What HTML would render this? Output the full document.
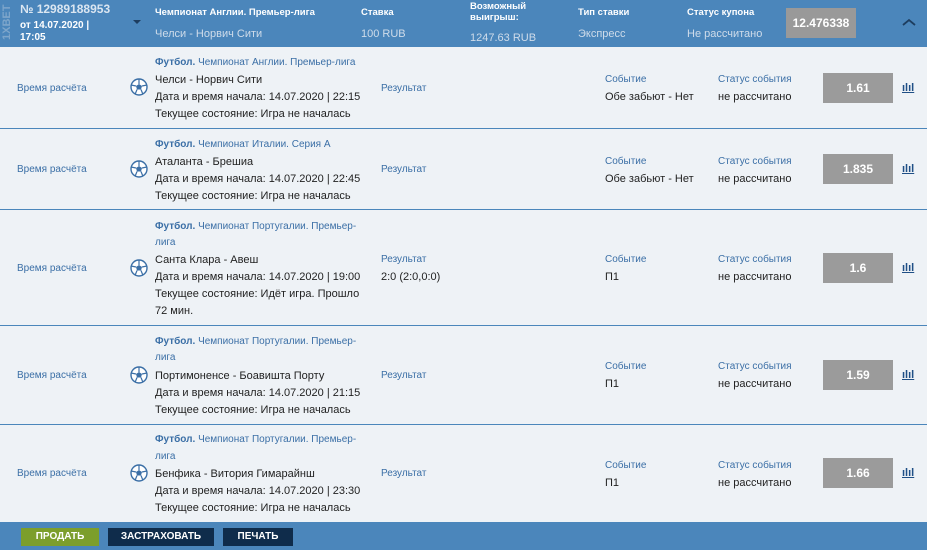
<!DOCTYPE html>
<html><head><meta charset="utf-8"><style>
*{margin:0;padding:0;box-sizing:border-box}
body{width:927px;height:550px;overflow:hidden;background:#eef2f6;font-family:"Liberation Sans","Noto Sans CJK SC",sans-serif;position:relative;color:#222}
.a{position:absolute;white-space:nowrap;line-height:16px}
.hd{position:absolute;left:0;top:0;width:927px;height:47px;background:#4b86bb}
.ft{position:absolute;left:0;top:522px;width:927px;height:28px;background:#4b86bb}
.line{position:absolute;left:0;width:927px;height:1px;background:#4b86bb}
.s{font-size:10px;color:#3b6fa6;margin-top:1px}
.m{font-size:11px;color:#222;margin-top:1px}
.odd{position:absolute;left:823px;width:70px;height:30px;background:#9b9b9b;color:#fff;font-weight:bold;font-size:12px;text-align:center;line-height:30px}
.btn{position:absolute;top:528px;height:18px;color:#fff;font-weight:bold;font-size:10px;text-align:center;line-height:18px}
.hw{color:#fff;font-size:9.5px;font-weight:bold}
.hl{color:#cfdcea;font-size:11px}
.ch{left:902px;font-weight:bold;font-size:11px;text-decoration:underline;color:#1f4f86}
</style></head><body>
<div class="hd"></div>
<div class="a" style="font-size:11px;font-weight:bold;color:#7ea6cb;transform:rotate(-90deg);transform-origin:0 0;top:40px;left:-1px">1XBET</div>
<div class="a" style="left:20px;top:1px;font-size:12px;font-weight:bold;color:#dbe6f1">№ 12989188953</div>
<div class="a" style="left:20px;top:20px;font-size:10px;font-weight:bold;color:#fff;line-height:12px">от 14.07.2020 |<br>17:05</div>
<div class="a" style="left:133px;top:20px;width:0;height:0;border-left:4px solid transparent;border-right:4px solid transparent;border-top:4px solid #1d3d5f"></div>
<div class="a hw" style="left:155px;top:5px">Чемпионат Англии. Премьер-лига</div>
<div class="a hl" style="left:155px;top:26px">Челси - Норвич Сити</div>
<div class="a hw" style="left:361px;top:5px">Ставка</div>
<div class="a hl" style="left:361px;top:26px">100 RUB</div>
<div class="a hw" style="left:470px;top:1px;line-height:11px">Возможный<br>выигрыш:</div>
<div class="a hl" style="left:470px;top:30px">1247.63 RUB</div>
<div class="a hw" style="left:578px;top:5px">Тип ставки</div>
<div class="a hl" style="left:578px;top:26px">Экспресс</div>
<div class="a hw" style="left:687px;top:5px">Статус купона</div>
<div class="a hl" style="left:687px;top:26px">Не рассчитано</div>
<div class="a" style="left:786px;top:8px;width:70px;height:30px;background:#999;color:#fff;font-weight:bold;font-size:12px;text-align:center;line-height:30px">12.476338</div>
<svg class="a" style="left:902px;top:18px" width="14" height="9"><path d="M1 7L7 2L13 7" stroke="#1d3d5f" stroke-width="1.8" fill="none"/></svg>

<!-- row 1 -->
<div class="a s" style="left:17px;top:80px">Время расчёта</div>
<svg class="a" style="left:130px;top:78px" width="18" height="18" viewBox="0 0 18 18"><circle cx="9" cy="9" r="8" fill="#fff" stroke="#3b6fa6" stroke-width="1.4"/><path d="M9 6l3 2-1 3.5H7L6 8z" fill="#3b6fa6"/><path d="M9 1v5M12 8l5-1M11 11.5l2 5M7 11.5l-2 5M6 8L1 7" stroke="#3b6fa6" stroke-width="1.2"/></svg>
<div class="a s" style="left:155px;top:54px"><b>Футбол.</b> Чемпионат Англии. Премьер-лига</div>
<div class="a m" style="left:155px;top:71px">Челси - Норвич Сити</div>
<div class="a m" style="left:155px;top:88px">Дата и время начала: 14.07.2020 | 22:15</div>
<div class="a m" style="left:155px;top:105px">Текущее состояние: Игра не началась</div>
<div class="a s" style="left:381px;top:80px">Результат</div>
<div class="a s" style="left:605px;top:71px">Событие</div>
<div class="a m" style="left:605px;top:88px">Обе забьют - Нет</div>
<div class="a s" style="left:718px;top:71px">Статус события</div>
<div class="a m" style="left:718px;top:88px">не рассчитано</div>
<div class="odd" style="top:73px">1.61</div>
<div class="a ch" style="top:80px">ılıl</div>
<div class="line" style="top:128px"></div>

<!-- row 2 -->
<div class="a s" style="left:17px;top:161px">Время расчёта</div>
<svg class="a" style="left:130px;top:160px" width="18" height="18" viewBox="0 0 18 18"><circle cx="9" cy="9" r="8" fill="#fff" stroke="#3b6fa6" stroke-width="1.4"/><path d="M9 6l3 2-1 3.5H7L6 8z" fill="#3b6fa6"/><path d="M9 1v5M12 8l5-1M11 11.5l2 5M7 11.5l-2 5M6 8L1 7" stroke="#3b6fa6" stroke-width="1.2"/></svg>
<div class="a s" style="left:155px;top:136px"><b>Футбол.</b> Чемпионат Италии. Серия А</div>
<div class="a m" style="left:155px;top:153px">Аталанта - Брешиа</div>
<div class="a m" style="left:155px;top:170px">Дата и время начала: 14.07.2020 | 22:45</div>
<div class="a m" style="left:155px;top:187px">Текущее состояние: Игра не началась</div>
<div class="a s" style="left:381px;top:161px">Результат</div>
<div class="a s" style="left:605px;top:153px">Событие</div>
<div class="a m" style="left:605px;top:170px">Обе забьют - Нет</div>
<div class="a s" style="left:718px;top:153px">Статус события</div>
<div class="a m" style="left:718px;top:170px">не рассчитано</div>
<div class="odd" style="top:154px">1.835</div>
<div class="a ch" style="top:161px">ılıl</div>
<div class="line" style="top:209px"></div>

<!-- row 3 -->
<div class="a s" style="left:17px;top:260px">Время расчёта</div>
<svg class="a" style="left:130px;top:259px" width="18" height="18" viewBox="0 0 18 18"><circle cx="9" cy="9" r="8" fill="#fff" stroke="#3b6fa6" stroke-width="1.4"/><path d="M9 6l3 2-1 3.5H7L6 8z" fill="#3b6fa6"/><path d="M9 1v5M12 8l5-1M11 11.5l2 5M7 11.5l-2 5M6 8L1 7" stroke="#3b6fa6" stroke-width="1.2"/></svg>
<div class="a s" style="left:155px;top:218px"><b>Футбол.</b> Чемпионат Португалии. Премьер-</div>
<div class="a s" style="left:155px;top:234px">лига</div>
<div class="a m" style="left:155px;top:251px">Санта Клара - Авеш</div>
<div class="a m" style="left:155px;top:268px">Дата и время начала: 14.07.2020 | 19:00</div>
<div class="a m" style="left:155px;top:285px">Текущее состояние: Идёт игра. Прошло</div>
<div class="a m" style="left:155px;top:302px">72 мин.</div>
<div class="a s" style="left:381px;top:251px">Результат</div>
<div class="a m" style="left:381px;top:268px">2:0 (2:0,0:0)</div>
<div class="a s" style="left:605px;top:251px">Событие</div>
<div class="a m" style="left:605px;top:268px">П1</div>
<div class="a s" style="left:718px;top:251px">Статус события</div>
<div class="a m" style="left:718px;top:268px">не рассчитано</div>
<div class="odd" style="top:253px">1.6</div>
<div class="a ch" style="top:260px">ılıl</div>
<div class="line" style="top:325px"></div>

<!-- row 4 -->
<div class="a s" style="left:17px;top:367px">Время расчёта</div>
<svg class="a" style="left:130px;top:366px" width="18" height="18" viewBox="0 0 18 18"><circle cx="9" cy="9" r="8" fill="#fff" stroke="#3b6fa6" stroke-width="1.4"/><path d="M9 6l3 2-1 3.5H7L6 8z" fill="#3b6fa6"/><path d="M9 1v5M12 8l5-1M11 11.5l2 5M7 11.5l-2 5M6 8L1 7" stroke="#3b6fa6" stroke-width="1.2"/></svg>
<div class="a s" style="left:155px;top:333px"><b>Футбол.</b> Чемпионат Португалии. Премьер-</div>
<div class="a s" style="left:155px;top:349px">лига</div>
<div class="a m" style="left:155px;top:367px">Портимоненсе - Боавишта Порту</div>
<div class="a m" style="left:155px;top:384px">Дата и время начала: 14.07.2020 | 21:15</div>
<div class="a m" style="left:155px;top:401px">Текущее состояние: Игра не началась</div>
<div class="a s" style="left:381px;top:367px">Результат</div>
<div class="a s" style="left:605px;top:358px">Событие</div>
<div class="a m" style="left:605px;top:375px">П1</div>
<div class="a s" style="left:718px;top:358px">Статус события</div>
<div class="a m" style="left:718px;top:375px">не рассчитано</div>
<div class="odd" style="top:360px">1.59</div>
<div class="a ch" style="top:367px">ılıl</div>
<div class="line" style="top:424px"></div>

<!-- row 5 -->
<div class="a s" style="left:17px;top:465px">Время расчёта</div>
<svg class="a" style="left:130px;top:464px" width="18" height="18" viewBox="0 0 18 18"><circle cx="9" cy="9" r="8" fill="#fff" stroke="#3b6fa6" stroke-width="1.4"/><path d="M9 6l3 2-1 3.5H7L6 8z" fill="#3b6fa6"/><path d="M9 1v5M12 8l5-1M11 11.5l2 5M7 11.5l-2 5M6 8L1 7" stroke="#3b6fa6" stroke-width="1.2"/></svg>
<div class="a s" style="left:155px;top:431px"><b>Футбол.</b> Чемпионат Португалии. Премьер-</div>
<div class="a s" style="left:155px;top:448px">лига</div>
<div class="a m" style="left:155px;top:465px">Бенфика - Витория Гимарайнш</div>
<div class="a m" style="left:155px;top:482px">Дата и время начала: 14.07.2020 | 23:30</div>
<div class="a m" style="left:155px;top:499px">Текущее состояние: Игра не началась</div>
<div class="a s" style="left:381px;top:465px">Результат</div>
<div class="a s" style="left:605px;top:457px">Событие</div>
<div class="a m" style="left:605px;top:474px">П1</div>
<div class="a s" style="left:718px;top:457px">Статус события</div>
<div class="a m" style="left:718px;top:474px">не рассчитано</div>
<div class="odd" style="top:458px">1.66</div>
<div class="a ch" style="top:465px">ılıl</div>

<div class="ft"></div>
<div class="btn" style="left:21px;width:78px;background:#7c9e2c">ПРОДАТЬ</div>
<div class="btn" style="left:108px;width:106px;background:#0f2c4b">ЗАСТРАХОВАТЬ</div>
<div class="btn" style="left:223px;width:70px;background:#0f2c4b">ПЕЧАТЬ</div>
</body></html>
